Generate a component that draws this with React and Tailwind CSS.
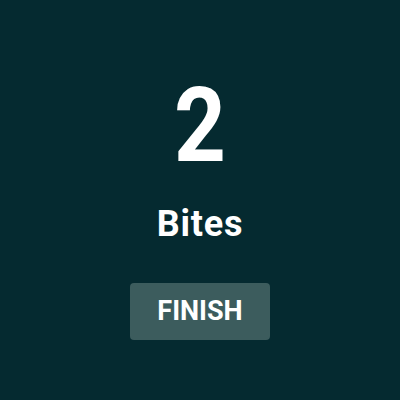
export default function App() {
  return (
    <div
      className="w-[400px] h-[400px] bg-[#052a30] flex flex-col items-center pt-[74px] text-white"
      style={{ fontFamily: "Roboto, 'Liberation Sans', sans-serif" }}
    >
      <div className="text-[104px] leading-none font-bold scale-x-[0.87]">2</div>
      <div className="mt-[28px] text-[36px] leading-none font-bold tracking-[0.8px]">Bites</div>
      <button className="mt-[41px] w-[140px] h-[57px] rounded bg-[#3c5c5d] text-[27px] font-bold leading-none text-white">
        FINISH
      </button>
    </div>
  );
}
